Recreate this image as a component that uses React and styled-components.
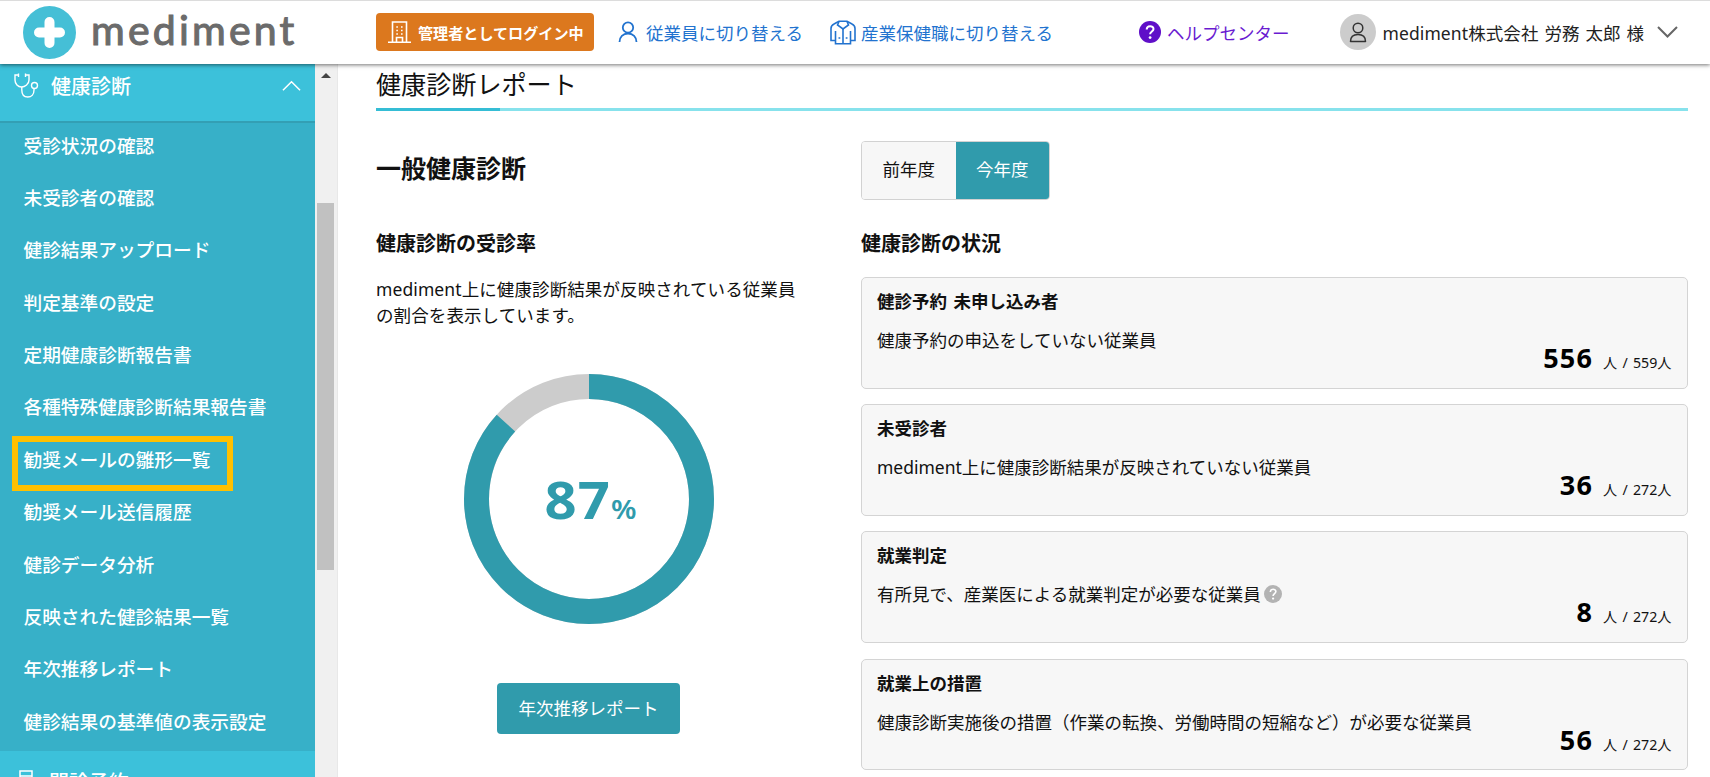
import React from "react";
import styled, { createGlobalStyle } from "styled-components";

const GlobalStyle = createGlobalStyle`
  * {
    box-sizing: border-box;
  }
  body {
    margin: 0;
    overflow: hidden;
    background: #fff;
    color: #111;
    font-family: "Noto Sans", "Noto Sans CJK JP", sans-serif;
    font-size: 17.5px;
  }
  h1, h2, h3, h4, p {
    margin: 0;
  }
`;

const Page = styled.div`
  display: flex;
  flex-direction: column;
  height: 777px;
  overflow: hidden;
`;

const Header = styled.header`
  position: relative;
  z-index: 2;
  flex: none;
  display: flex;
  align-items: center;
  height: 64px;
  padding: 0 0 1px 23px;
  border-top: 1px solid #dcdcdc;
  background: #fff;
  box-shadow: 0 1px 4px rgba(0, 0, 0, 0.55);
`;

const Logo = styled.div`
  display: flex;
  align-items: center;
  flex: none;
  width: 353px;
`;

const LogoText = styled.span`
  margin: -4px 0 0 15px;
  color: #6b6b6b;
  font-family: Lato, sans-serif;
  font-size: 41px;
  font-weight: 400;
  line-height: 50px;
  letter-spacing: 3.2px;
  -webkit-text-stroke: 1.1px #6b6b6b;
`;

const RoleBadge = styled.div`
  display: flex;
  align-items: center;
  flex: none;
  width: 218px;
  height: 38px;
  padding-left: 12px;
  border-radius: 4px;
  background: #dc781e;
  color: #fff;
  font-size: 15.1px;
  font-weight: 700;
  white-space: nowrap;

  svg {
    margin-right: 7px;
  }
`;

const HeaderLink = styled.a`
  display: flex;
  align-items: center;
  flex: none;
  gap: ${(props) => props.$gap || 6}px;
  margin-left: ${(props) => props.$left}px;
  color: ${(props) => props.$color || "#2273cf"};
  white-space: nowrap;
`;

const Avatar = styled.span`
  display: flex;
  align-items: center;
  justify-content: center;
  width: 36px;
  height: 36px;
  border-radius: 50%;
  background: #ccc;
`;

const UserName = styled.span`
  width: 269px;
  letter-spacing: 0.1px;
  word-spacing: 1.2px;
`;

const Body = styled.div`
  display: flex;
  flex: 1;
  min-height: 0;
`;

const Sidebar = styled.nav`
  flex: none;
  width: 315px;
  overflow: hidden;
  background: #3cc1da;
  color: #fff;
`;

const MenuHeading = styled.div`
  display: flex;
  height: 58.5px;
  padding: ${(props) => props.$top || 9}px 14px 0 13px;
  border-bottom: 2px solid #339fb4;
  font-size: 20px;
  font-weight: 500;
  line-height: 28px;

  span {
    flex: 1;
    margin-left: 12px;
  }
`;

const ChevronSlot = styled.div`
  padding-top: 7px;
  line-height: 0;
`;

const SubMenu = styled.ul`
  margin: 0;
  padding: 0;
  background: #37b0c8;
  list-style: none;
`;

const SubMenuItem = styled.li`
  position: relative;
  height: 52.4px;
  padding: 9px 0 0 23.5px;
  font-size: 18.7px;
  font-weight: 500;
  line-height: 28px;
  white-space: nowrap;
`;

const Marker = styled.span`
  position: absolute;
  top: -1px;
  left: 12px;
  width: 221px;
  height: 55px;
  border: 6px solid #ffc000;
`;

const ScrollTrack = styled.div`
  flex: none;
  display: flex;
  flex-direction: column;
  width: 23px;
  padding: 9px 0 0 2px;
  border-right: 1px solid #e8e8e8;
  background: #f0f0f0;

  svg {
    margin-left: 4px;
  }
`;

const ScrollThumb = styled.div`
  width: 17px;
  height: 367px;
  margin-top: 125px;
  background: #c1c1c1;
`;

const Main = styled.main`
  flex: 1;
  padding: 4px 22.5px 0 38px;
`;

const PageTitle = styled.h1`
  height: 43px;
  border-bottom: 3px solid #87e2ec;
  border-image: linear-gradient(to right, #35bdd5 125px, #87e2ec 125px) 1;
  font-size: 25.1px;
  font-weight: 400;
  line-height: 33px;
`;

const Columns = styled.div`
  display: grid;
  grid-template-columns: 485px 1fr;
`;

const Column = styled.section`
  padding-top: 30px;
`;

const SectionTitle = styled.h2`
  height: 58px;
  font-size: 25px;
  font-weight: 700;
  line-height: 54px;
`;

const Toggle = styled.div`
  display: inline-flex;
  width: 189px;
  height: 58.500px;
  overflow: hidden;
  border: 1.5px solid #d2d2d2;
  border-radius: 4px;
  vertical-align: top;
`;

const ToggleOption = styled.button`
  flex: 1;
  padding: 0 0 3px;
  border: none;
  background: ${(props) => (props.$active ? "#309bac" : "#f7f7f7")};
  color: ${(props) => (props.$active ? "#fff" : "#111")};
  font: inherit;
`;

const SubTitle = styled.h3`
  margin-top: ${(props) => props.$top || 31}px;
  font-size: 20px;
  font-weight: 700;
  line-height: 28px;
`;

const Lead = styled.p`
  margin-top: 18px;
  line-height: 26px;
  letter-spacing: 0.1px;
  white-space: nowrap;
`;

const RatePanel = styled.div`
  display: flex;
  flex-direction: column;
  align-items: center;
  width: 425px;
  padding-top: 46px;
`;

const DonutWrap = styled.div`
  display: grid;
  place-items: center;

  > * {
    grid-area: 1 / 1;
  }
`;

const Rate = styled.div`
  display: flex;
  align-items: baseline;
  margin: 10px 0 0 5px;
  color: #309bac;
  font-size: 52px;
  font-weight: 700;
  letter-spacing: 1px;
  line-height: 60px;
  transform: scaleX(1.08);

  small {
    font-size: 27px;
    font-weight: 600;
    letter-spacing: 0;
  }
`;

const ReportButton = styled.button`
  width: 183px;
  height: 51px;
  margin-top: 59px;
  padding: 0 0 3px;
  border: none;
  border-radius: 4px;
  background: #309bac;
  color: #fff;
  font: inherit;
  white-space: nowrap;
`;

const CardList = styled.div`
  display: flex;
  flex-direction: column;
  gap: 15.7px;
  margin-top: 19px;
`;

const Card = styled.article`
  height: 111.5px;
  padding: 10px 15px 0;
  border: 1.5px solid #d4d4d4;
  border-radius: 5px;
  background: #f7f7f7;
`;

const CardTitle = styled.h4`
  font-size: 17.5px;
  font-weight: 700;
  line-height: 26px;
  word-spacing: 2px;
`;

const CardText = styled.p`
  display: flex;
  align-items: center;
  gap: 3px;
  margin-top: 13px;
  line-height: 26px;
`;

const Count = styled.div`
  display: flex;
  align-items: baseline;
  justify-content: flex-end;
  margin-top: -11px;
  font-size: 14.2px;
  line-height: 32px;
  word-spacing: 1.500px;

  strong {
    margin-right: 10px;
    color: #000;
    font-size: 27px;
    letter-spacing: 1.2px;
  }
`;

const menuItems = [
  "受診状況の確認",
  "未受診者の確認",
  "健診結果アップロード",
  "判定基準の設定",
  "定期健康診断報告書",
  "各種特殊健康診断結果報告書",
  "勧奨メールの雛形一覧",
  "勧奨メール送信履歴",
  "健診データ分析",
  "反映された健診結果一覧",
  "年次推移レポート",
  "健診結果の基準値の表示設定",
];

const statuses = [
  { title: "健診予約 未申し込み者", text: "健康予約の申込をしていない従業員", count: 556, total: 559 },
  { title: "未受診者", text: "mediment上に健康診断結果が反映されていない従業員", count: 36, total: 272 },
  { title: "就業判定", text: "有所見で、産業医による就業判定が必要な従業員", count: 8, total: 272, help: true },
  {
    title: "就業上の措置",
    text: "健康診断実施後の措置（作業の転換、労働時間の短縮など）が必要な従業員",
    count: 56,
    total: 272,
  },
];

const LogoMark = () => (
  <svg width="53" height="53" viewBox="0 0 53 53">
    <circle cx="26.5" cy="26.5" r="26.5" fill="#45bfd6" />
    <path d="M26.5 16v21M16 26.5h21" stroke="#fff" strokeWidth="10" strokeLinecap="round" />
  </svg>
);

const BuildingIcon = () => (
  <svg width="23" height="24" viewBox="0 0 23 24" fill="none" stroke="#fff" strokeWidth="1.6">
    <path d="M4.5 22V2h14v20M0 22.3h23M8.5 22v-4.5h6V22" />
    <path d="M8.300 7h1.600M13 7h1.600M8.300 10.5h1.600M13 10.5h1.600M8.300 14h1.600M13 14h1.600" />
  </svg>
);

const PersonIcon = () => (
  <svg width="20" height="22" viewBox="0 0 20 22" fill="none" stroke="#2273cf" strokeWidth="1.8">
    <circle cx="10" cy="6.5" r="5.2" />
    <path d="M1.5 21c0-5 3.5-8.5 8.5-8.5s8.5 3.5 8.5 8.5" />
  </svg>
);

const CoatIcon = () => (
  <svg width="26" height="25" viewBox="0 0 26 25" fill="none" stroke="#2273cf" strokeWidth="1.6">
    <path d="M5.5 20.5H1V8.500C1 6 2 5 4 4l5-2.800h8L22 4c2 1 3 2 3 4.500v12h-4.500" />
    <path d="M5.500 11v12.700h15V11M13 8.500v15" />
    <path d="M9 1.500L7.500 5 13 9l5.500-4L17 1.500" />
    <path d="M8.500 18h1.800M15.700 18h1.800" />
  </svg>
);

const HelpIcon = ({ size, color }) => (
  <svg width={size} height={size} viewBox="0 0 22 22" fill="none">
    <circle cx="11" cy="11" r="11" fill={color} />
    <path d="M7.7 8.5c0-4.500 6.800-4.300 6.800-.5 0 2.400-3.400 2.700-3.400 5.300" stroke="#fff" strokeWidth="2" />
    <circle cx="11.1" cy="16.6" r="1.4" fill="#fff" />
  </svg>
);

const UserIcon = () => (
  <svg width="18" height="21" viewBox="0 0 18 21" fill="none" stroke="#333" strokeWidth="1.5">
    <circle cx="9" cy="6" r="4.8" />
    <path d="M1.500 19.500c0-4.500 3-7 7.500-7s7.500 2.500 7.500 7z" strokeLinejoin="round" />
  </svg>
);

const Chevron = ({ up, width, color, stroke }) => (
  <svg width={width} height="12" viewBox="0 0 20 12" fill="none" stroke={color} strokeWidth={stroke}>
    <path d={up ? "M1 10.500L10 1.500l9 9" : "M.500 1l9.500 9.500L19.500 1"} />
  </svg>
);

const StethoscopeIcon = () => (
  <svg width="26" height="26" viewBox="0 0 26 26" fill="none" stroke="#fff" strokeWidth="1.4">
    <path d="M5.500 2H2v5c0 4 3 7 6.500 7S16 11 16 7V2h-3.500M5.500.500v3.500M12.500.500v3.500" />
    <path d="M8.800 14v3c0 4.500 2.500 7 6 7s6.200-2.500 6.200-7v-1" />
    <circle cx="21.500" cy="12.500" r="3" />
  </svg>
);

const ListIcon = () => (
  <svg width="24" height="24" viewBox="0 0 24 24" fill="none" stroke="#fff" strokeWidth="1.5">
    <path d="M7 20V2h12v18zM7 7h12M7 12h12M3 20h20" />
  </svg>
);

const Donut = () => {
  const length = 2 * Math.PI * 112.5;
  return (
    <svg width="250" height="250" viewBox="0 0 250 250" fill="none" strokeWidth="25">
      <circle cx="125" cy="125" r="112.5" stroke="#ccc" />
      <circle
        cx="125"
        cy="125"
        r="112.5"
        stroke="#309bac"
        strokeDasharray={`${length * 0.867} ${length}`}
        transform="rotate(-90 125 125)"
      />
    </svg>
  );
};

const App = () => {
  return (
    <Page>
      <GlobalStyle />
      <Header>
        <Logo>
          <LogoMark />
          <LogoText>mediment</LogoText>
        </Logo>
        <RoleBadge>
          <BuildingIcon />
          管理者としてログイン中
        </RoleBadge>
        <HeaderLink $left={24} $gap={8}>
          <PersonIcon />
          従業員に切り替える
        </HeaderLink>
        <HeaderLink $left={27} $gap={5}>
          <CoatIcon />
          産業保健職に切り替える
        </HeaderLink>
        <HeaderLink $left={86} $color="#6a1bd1">
          <HelpIcon size={22} color="#5f0fc8" />
          ヘルプセンター
        </HeaderLink>
        <HeaderLink $left={51} $color="#222">
          <Avatar>
            <UserIcon />
          </Avatar>
          <UserName>mediment株式会社 労務 太郎 様</UserName>
          <Chevron width={21} color="#666" stroke={2} />
        </HeaderLink>
      </Header>

      <Body>
        <Sidebar>
          <MenuHeading>
            <StethoscopeIcon />
            <span>健康診断</span>
            <ChevronSlot>
              <Chevron up width={19} color="#fff" stroke={1.6} />
            </ChevronSlot>
          </MenuHeading>
          <SubMenu>
            {menuItems.map((item) => (
              <SubMenuItem key={item}>
                {item}
                {item === "勧奨メールの雛形一覧" && <Marker />}
              </SubMenuItem>
            ))}
          </SubMenu>
          <MenuHeading $top={18}>
            <ListIcon />
            <span>問診予約</span>
          </MenuHeading>
        </Sidebar>
        <ScrollTrack>
          <svg width="10" height="5" viewBox="0 0 10 5">
            <path d="M0 5l5-5 5 5z" fill="#444" />
          </svg>
          <ScrollThumb />
        </ScrollTrack>

        <Main>
          <PageTitle>健康診断レポート</PageTitle>
          <Columns>
            <Column>
              <SectionTitle>一般健康診断</SectionTitle>
              <SubTitle>健康診断の受診率</SubTitle>
              <Lead>
                mediment上に健康診断結果が反映されている従業員
                <br />
                の割合を表示しています。
              </Lead>
              <RatePanel>
                <DonutWrap>
                  <Donut />
                  <Rate>
                    87<small>%</small>
                  </Rate>
                </DonutWrap>
                <ReportButton>年次推移レポート</ReportButton>
              </RatePanel>
            </Column>
            <Column>
              <Toggle>
                <ToggleOption>前年度</ToggleOption>
                <ToggleOption $active>今年度</ToggleOption>
              </Toggle>
              <SubTitle $top={30.5}>健康診断の状況</SubTitle>
              <CardList>
                {statuses.map((status) => (
                  <Card key={status.title}>
                    <CardTitle>{status.title}</CardTitle>
                    <CardText>
                      {status.text}
                      {status.help && <HelpIcon size={18} color="#b3b3b3" />}
                    </CardText>
                    <Count>
                      <strong>{status.count}</strong>人 / {status.total}人
                    </Count>
                  </Card>
                ))}
              </CardList>
            </Column>
          </Columns>
        </Main>
      </Body>
    </Page>
  );
};

export default App;
